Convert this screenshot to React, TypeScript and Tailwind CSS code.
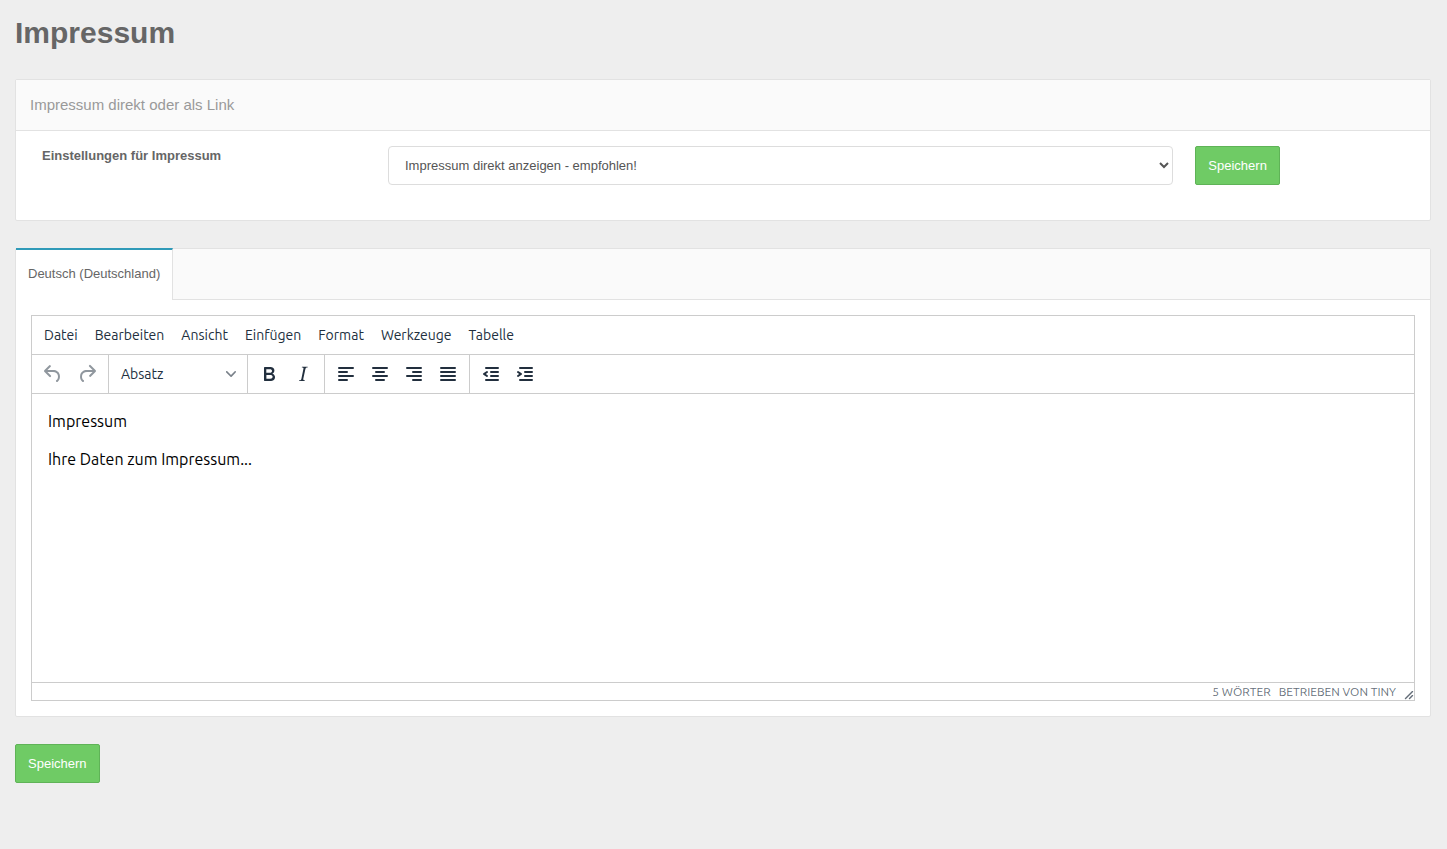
import type { ReactNode } from 'react';

const menuItems = ['Datei', 'Bearbeiten', 'Ansicht', 'Einfügen', 'Format', 'Werkzeuge', 'Tabelle'];

const icons = {
  undo: 'M6.4 8H12c3.7 0 6.2 2 6.8 5.1.6 2.7-.4 5.6-2.3 6.8a1 1 0 01-1-1.8c1.1-.6 1.8-2.7 1.4-4.6-.5-2.1-2.1-3.5-4.9-3.5H6.4l3.3 3.3a1 1 0 11-1.4 1.4l-5-5a1 1 0 010-1.4l5-5a1 1 0 011.4 1.4L6.4 8z',
  redo: 'M17.6 10H12c-2.8 0-4.4 1.4-4.9 3.5-.4 2 .3 4 1.4 4.6a1 1 0 11-1 1.8c-2-1.2-2.9-4.1-2.3-6.8.6-3 3-5.1 6.8-5.1h5.6l-3.3-3.3a1 1 0 111.4-1.4l5 5a1 1 0 010 1.4l-5 5a1 1 0 01-1.4-1.4l3.3-3.3z',
  bold: 'M7.8 19c-.3 0-.5 0-.6-.2l-.2-.5V5.7c0-.2 0-.4.2-.5l.6-.2h5c1.5 0 2.7.3 3.5 1 .7.6 1.1 1.4 1.1 2.5a3 3 0 01-.6 1.9c-.4.6-1 1-1.6 1.2.4.1.9.3 1.3.6s.8.7 1 1.2c.4.4.5 1 .5 1.6 0 1.3-.4 2.3-1.3 3-.8.7-2.1 1-3.8 1H7.8zm5-8.3c.6 0 1.2-.1 1.6-.5.4-.3.6-.7.6-1.3 0-1.1-.8-1.7-2.3-1.7H9.3v3.5h3.4zm.5 6c.7 0 1.3-.1 1.7-.4.4-.4.6-.9.6-1.5s-.2-1-.7-1.4c-.4-.3-1-.4-2-.4H9.4v3.8h4z',
  italic: 'M16.7 4.7l-.1.9h-.3c-.6 0-1 0-1.4.3-.3.3-.4.6-.5 1.1l-2.1 9.8v.6c0 .5.4.8 1.4.8h.2l-.2.8H8l.2-.8h.2c1.1 0 1.8-.5 2-1.5l2-9.8.1-.5c0-.6-.4-.8-1.4-.8h-.3l.2-.9h5.8z',
  alignLeft: 'M5 5h14a1 1 0 010 2H5a1 1 0 110-2zm0 4h8a1 1 0 010 2H5a1 1 0 110-2zm0 8h8a1 1 0 010 2H5a1 1 0 010-2zm0-4h14a1 1 0 010 2H5a1 1 0 010-2z',
  alignCenter: 'M5 5h14a1 1 0 010 2H5a1 1 0 110-2zm3 4h8a1 1 0 010 2H8a1 1 0 110-2zm0 8h8a1 1 0 010 2H8a1 1 0 010-2zm-3-4h14a1 1 0 010 2H5a1 1 0 010-2z',
  alignRight: 'M5 5h14a1 1 0 010 2H5a1 1 0 110-2zm6 4h8a1 1 0 010 2h-8a1 1 0 010-2zm0 8h8a1 1 0 010 2h-8a1 1 0 010-2zm-6-4h14a1 1 0 010 2H5a1 1 0 010-2z',
  justify: 'M5 5h14a1 1 0 010 2H5a1 1 0 110-2zm0 4h14a1 1 0 010 2H5a1 1 0 110-2zm0 4h14a1 1 0 010 2H5a1 1 0 010-2zm0 4h14a1 1 0 010 2H5a1 1 0 010-2z',
  outdent: 'M7 5h12a1 1 0 010 2H7a1 1 0 110-2zm5 4h7a1 1 0 010 2h-7a1 1 0 010-2zm0 4h7a1 1 0 010 2h-7a1 1 0 010-2zm-5 4h12a1 1 0 010 2H7a1 1 0 010-2zm1.6-3.8a1 1 0 01-1.2 1.6l-3-2a1 1 0 010-1.6l3-2a1 1 0 011.2 1.6L6.8 12l1.8 1.2z',
  indent: 'M7 5h12a1 1 0 010 2H7a1 1 0 110-2zm5 4h7a1 1 0 010 2h-7a1 1 0 010-2zm0 4h7a1 1 0 010 2h-7a1 1 0 010-2zm-5 4h12a1 1 0 010 2H7a1 1 0 010-2zm-2.6-3.8L6.2 12l-1.8-1.2a1 1 0 011.2-1.6l3 2a1 1 0 010 1.6l-3 2a1 1 0 11-1.2-1.6z',
};

type ToolButtonProps = {
  icon: keyof typeof icons;
  label: string;
  disabled?: boolean;
};

const ToolButton = ({ icon, label, disabled }: ToolButtonProps) => (
  <button
    type="button"
    aria-label={label}
    disabled={disabled}
    className="flex h-[34px] w-[34px] items-center justify-center text-[#222f3e] disabled:text-[#222f3e]/50"
  >
    <svg width="24" height="24" viewBox="0 0 24 24" fill="currentColor" fillRule="evenodd">
      <path d={icons[icon]} />
    </svg>
  </button>
);

const ToolGroup = ({ children }: { children: ReactNode }) => (
  <div className="flex items-center border-r border-[#cccccc] px-1 last:border-r-0">{children}</div>
);

const SaveButton = () => (
  <button type="button" className="h-[39px] rounded-xs border border-[#5fb357] bg-[#6fcb65] px-3 text-[13px] text-white">
    Speichern
  </button>
);

const Editor = () => (
  <div className="border border-[#cccccc] font-['Ubuntu','Noto_Sans',sans-serif] text-sm text-[#222f3e]">
    <div className="flex h-[39px] items-center gap-px border-b border-[#cccccc] px-1">
      {menuItems.map((item) => (
        <button key={item} type="button" className="px-2">{item}</button>
      ))}
    </div>
    <div className="flex h-[39px] border-b border-[#cccccc]">
      <ToolGroup>
        <ToolButton icon="undo" label="Rückgängig" disabled />
        <ToolButton icon="redo" label="Wiederholen" disabled />
      </ToolGroup>
      <ToolGroup>
        <button type="button" className="flex h-[34px] w-[130px] items-center justify-between pr-[7px] pl-2">
          Absatz
          <svg width="10" height="10" viewBox="0 0 10 10" fill="currentColor" className="opacity-60">
            <path d="M8.7 2.2c.3-.3.8-.3 1 0 .4.4.4.9 0 1.2L5.7 7.8c-.3.3-.9.3-1.2 0L.2 3.4a.8.8 0 010-1.2c.3-.3.8-.3 1.1 0L5 6l3.7-3.8z" />
          </svg>
        </button>
      </ToolGroup>
      <ToolGroup>
        <ToolButton icon="bold" label="Fett" />
        <ToolButton icon="italic" label="Kursiv" />
      </ToolGroup>
      <ToolGroup>
        <ToolButton icon="alignLeft" label="Linksbündig ausrichten" />
        <ToolButton icon="alignCenter" label="Zentriert ausrichten" />
        <ToolButton icon="alignRight" label="Rechtsbündig ausrichten" />
        <ToolButton icon="justify" label="Blocksatz" />
      </ToolGroup>
      <ToolGroup>
        <ToolButton icon="outdent" label="Einzug verkleinern" />
        <ToolButton icon="indent" label="Einzug vergrößern" />
      </ToolGroup>
    </div>
    <div
      role="textbox"
      aria-multiline="true"
      aria-label="Impressum Text"
      contentEditable
      suppressContentEditableWarning
      className="min-h-72 space-y-4 p-4 text-base leading-[22px] text-black outline-none"
    >
      <p>Impressum</p>
      <p>Ihre Daten zum Impressum...</p>
    </div>
    <div className="flex h-[18px] items-center justify-end gap-2 border-t border-[#cccccc] text-xs text-[#222f3e]/70">
      <button type="button">5 WÖRTER</button>
      <a href="#tiny">BETRIEBEN VON TINY</a>
      <svg width="10" height="10" viewBox="0 0 10 10" fill="currentColor" className="self-end">
        <path d="M8.1 1.1A.5.5 0 119 2l-7 7A.5.5 0 111 8l7-7zM8.1 5.1A.5.5 0 119 6l-3 3A.5.5 0 115 8l3-3z" />
      </svg>
    </div>
  </div>
);

const App = () => {
  return (
    <main className="min-h-screen bg-[#eeeeee] pt-[13px] pr-4 pb-16 pl-[15px] font-['Liberation_Sans',Arial,sans-serif] text-[13px] text-[#666666]">
      <h1 className="text-[30px] leading-10 font-bold">Impressum</h1>

      <section className="mt-[26px] rounded-xs border border-[#e2e2e2] bg-white">
        <h2 className="border-b border-[#e2e2e2] bg-[#fafafa] px-[14px] py-[15px] text-[15px] leading-5 text-[#999999]">
          Impressum direkt oder als Link
        </h2>
        <form className="grid grid-cols-12 px-[15px] pt-[15px] pb-[35px]">
          <label htmlFor="imprint-mode" className="col-span-3 px-[11px] leading-5 font-bold">
            Einstellungen für Impressum
          </label>
          <div className="col-span-7 px-[11px]">
            <select
              id="imprint-mode"
              className="h-[39px] w-full rounded border border-[#dddddd] bg-white px-3 text-[#555555]"
            >
              <option>Impressum direkt anzeigen - empfohlen!</option>
              <option>Impressum als Link anzeigen</option>
            </select>
          </div>
          <div className="col-span-2 px-[11px]">
            <SaveButton />
          </div>
        </form>
      </section>

      <section className="mt-[27px] rounded-xs border border-[#e2e2e2] bg-white">
        <div role="tablist" className="flex h-[51px] border-b border-[#e2e2e2] bg-[#fafafa]">
          <button
            type="button"
            role="tab"
            aria-selected="true"
            className="-my-px border-t-2 border-r border-t-[#2f9ab8] border-r-[#e2e2e2] bg-white px-3 pb-0.5"
          >
            Deutsch (Deutschland)
          </button>
        </div>
        <div className="p-[15px]">
          <Editor />
        </div>
      </section>

      <div className="mt-[27px]">
        <SaveButton />
      </div>
    </main>
  );
};

export default App;
